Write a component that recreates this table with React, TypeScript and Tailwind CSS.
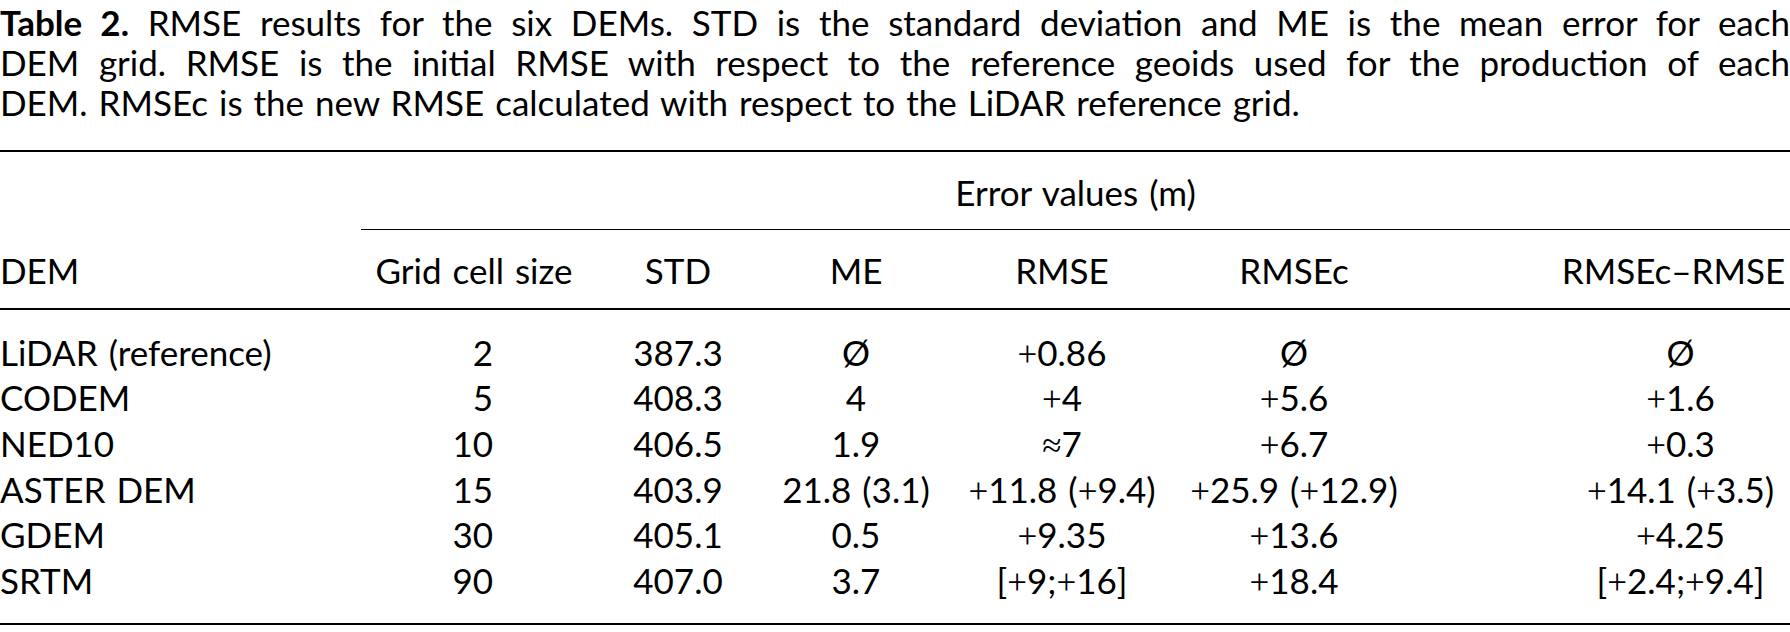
import React from "react";

function M({ t }: { t: string }) {
  const parts = t.split(/([+≈])/);
  return (
    <>
      {parts.map((p, i) =>
        p === "+" || p === "≈" ? (
          <span key={i} className="font-['Liberation_Serif'] leading-[0]">
            {p}
          </span>
        ) : (
          <React.Fragment key={i}>{p}</React.Fragment>
        )
      )}
    </>
  );
}

const rows: string[][] = [
  ["LiDAR (reference)", "2", "387.3", "Ø", "+0.86", "Ø", "Ø"],
  ["CODEM", "5", "408.3", "4", "+4", "+5.6", "+1.6"],
  ["NED10", "10", "406.5", "1.9", "≈7", "+6.7", "+0.3"],
  ["ASTER DEM", "15", "403.9", "21.8 (3.1)", "+11.8 (+9.4)", "+25.9 (+12.9)", "+14.1 (+3.5)"],
  ["GDEM", "30", "405.1", "0.5", "+9.35", "+13.6", "+4.25"],
  ["SRTM", "90", "407.0", "3.7", "[+9;+16]", "+18.4", "[+2.4;+9.4]"],
];

const cols = "grid grid-cols-[361px_226px_182px_174px_238px_226px_383px]";

export default function App() {
  return (
    <div className="w-[1790px] h-[632px] bg-white text-black font-['Lato','Liberation_Sans',sans-serif] text-[35px] [word-spacing:2px] overflow-hidden">
      <div className="leading-[40px] pt-[2px]">
        <div className="text-justify [text-align-last:justify]">
          <span className="font-bold">Table 2.</span> RMSE results for the six DEMs. STD is the standard deviation and ME is the mean error for each
        </div>
        <div className="text-justify [text-align-last:justify]">
          DEM grid. RMSE is the initial RMSE with respect to the reference geoids used for the production of each
        </div>
        <div>DEM. RMSEc is the new RMSE calculated with respect to the LiDAR reference grid.</div>
      </div>

      <div className="mt-[28px] border-t-2 border-black">
        <div className={`${cols} border-b-2 border-black leading-[46px]`}>
          <div />
          <div className="col-span-6 text-center pt-[17px] pb-[14px] border-b-[1.5px] border-black whitespace-nowrap">
            Error values (m)
          </div>
          <div className="pt-[17px] pb-[15px] whitespace-nowrap">DEM</div>
          <div className="pt-[17px] pb-[15px] text-center whitespace-nowrap">Grid cell size</div>
          <div className="pt-[17px] pb-[15px] text-center">STD</div>
          <div className="pt-[17px] pb-[15px] text-center">ME</div>
          <div className="pt-[17px] pb-[15px] text-center">RMSE</div>
          <div className="pt-[17px] pb-[15px] text-center">RMSEc</div>
          <div className="pt-[17px] pb-[15px] text-center pl-[150px] whitespace-nowrap">RMSEc–RMSE</div>
        </div>

        <div className={`${cols} border-b-2 border-black leading-[45.7px] pt-[19.5px] pb-[19px]`}>
          {rows.map((r, i) => (
            <React.Fragment key={i}>
              <div className="whitespace-nowrap">{r[0]}</div>
              <div className="text-right pr-[94px]">{r[1]}</div>
              <div className="text-center">{r[2]}</div>
              <div className="text-center whitespace-nowrap">{r[3]}</div>
              <div className="text-center whitespace-nowrap">
                <M t={r[4]} />
              </div>
              <div className="text-center whitespace-nowrap">
                <M t={r[5]} />
              </div>
              <div className="text-center whitespace-nowrap pl-[164px]">
                <M t={r[6]} />
              </div>
            </React.Fragment>
          ))}
        </div>
      </div>
    </div>
  );
}
